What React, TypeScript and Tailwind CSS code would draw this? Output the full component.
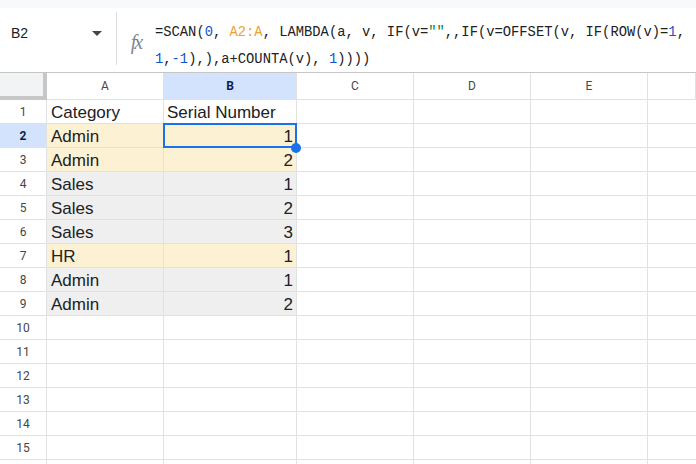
import React from 'react';

const COLS = ['A', 'B', 'C', 'D', 'E', ''];
const COL_W = ['w-[117px]', 'w-[133px]', 'w-[117px]', 'w-[117px]', 'w-[117px]', 'flex-1'];

type Row = { a?: string; b?: string | number; tone?: 'yellow' | 'gray' };

const ROWS: Row[] = [
  { a: 'Category', b: 'Serial Number' },
  { a: 'Admin', b: 1, tone: 'yellow' },
  { a: 'Admin', b: 2, tone: 'yellow' },
  { a: 'Sales', b: 1, tone: 'gray' },
  { a: 'Sales', b: 2, tone: 'gray' },
  { a: 'Sales', b: 3, tone: 'gray' },
  { a: 'HR', b: 1, tone: 'yellow' },
  { a: 'Admin', b: 1, tone: 'gray' },
  { a: 'Admin', b: 2, tone: 'gray' },
  {}, {}, {}, {}, {}, {},
];

const TONE: Record<string, string> = {
  yellow: 'bg-[#fdf1d3]',
  gray: 'bg-[#efefef]',
};

const cellFont = { fontFamily: '"Liberation Sans", Arial, sans-serif' };
const headFont = { fontFamily: 'Roboto, "Liberation Sans", sans-serif' };
const monoFont = { fontFamily: '"Liberation Mono", "DejaVu Sans Mono", monospace' };

const Blue = ({ children }: { children: React.ReactNode }) => <span className="text-[#1155cc]">{children}</span>;

export default function App() {
  return (
    <div className="w-[696px] h-[464px] overflow-hidden bg-white relative text-[#202124]">
      <div className="h-[8px] bg-[#f8f9fa]" />

      {/* Formula bar */}
      <div className="h-[64px] flex">
        <div className="w-[116px] flex items-start justify-between pt-[15px] pl-[11px] pr-[14px]">
          <span className="text-[14px] leading-[20px]" style={cellFont}>B2</span>
          <svg width="10" height="5" viewBox="0 0 10 5" className="mt-[8px]">
            <path d="M0 0h10L5 5z" fill="#444746" />
          </svg>
        </div>
        <div className="w-px bg-[#dadce0] mt-[4px] mb-[7px]" />
        <div className="w-[38px] flex items-center justify-center">
          <span className="text-[20px] italic text-[#80868b] mt-[4px] tracking-[-2px]" style={{ fontFamily: '"Liberation Serif", serif' }}>
            fx
          </span>
        </div>
        <div className="flex-1 text-[13.8px] leading-[27px] pt-[11px] whitespace-pre" style={monoFont}>
          <div>
            =SCAN(<Blue>0</Blue>, <span className="text-[#f0a030]">A2:A</span>, LAMBDA(a, v, IF(v=
            <span className="text-[#0b8043]">""</span>,,IF(v=OFFSET(v, IF(ROW(v)=<Blue>1</Blue>,
          </div>
          <div>
            <Blue>1</Blue>,<Blue>-1</Blue>),),a+COUNTA(v), <Blue>1</Blue>))))
          </div>
        </div>
      </div>

      {/* Grid */}
      <div className="flex h-[28px] border-t border-[#c4c7c5] text-[12px] text-[#444746]" style={headFont}>
        <div className="w-[47px] bg-[#f1f3f4] border-r-[4px] border-b-[4px] border-[#c7c7c7]" />
        {COLS.map((c, i) => (
          <div
            key={i}
            className={`${COL_W[i]} border-r border-b border-[#e1e1e1] flex items-center justify-center ${
              c === 'B' ? 'bg-[#d3e3fd] font-bold text-[#0b1f4f]' : 'bg-white'
            }`}
          >
            {c}
          </div>
        ))}
      </div>

      {ROWS.map((r, ri) => {
        const n = ri + 1;
        const tone = r.tone ? TONE[r.tone] : 'bg-white';
        return (
          <div key={ri} className="flex h-[24px]">
            <div
              className={`w-[47px] border-r border-b border-[#e1e1e1] flex items-center justify-center text-[12px] ${
                n === 2 ? 'bg-[#d3e3fd] font-bold text-[#0b1f4f]' : 'text-[#444746]'
              }`}
              style={headFont}
            >
              {n}
            </div>
            <div
              className={`w-[117px] border-r border-b border-[#e1e1e1] ${tone} flex items-end px-[4px] text-[17px] leading-[20px]`}
              style={cellFont}
            >
              {r.a}
            </div>
            <div
              className={`w-[133px] border-r border-b border-[#e1e1e1] ${tone} flex items-end px-[3px] text-[17px] leading-[20px] ${
                typeof r.b === 'number' ? 'justify-end' : ''
              }`}
              style={cellFont}
            >
              {r.b}
            </div>
            {[0, 1, 2].map((k) => (
              <div key={k} className="w-[117px] border-r border-b border-[#e1e1e1]" />
            ))}
            <div className="flex-1 border-b border-[#e1e1e1]" />
          </div>
        );
      })}

      {/* Partial next row */}
      <div className="flex h-[24px]">
        <div className="w-[47px] border-r border-[#e1e1e1]" />
        <div className="w-[117px] border-r border-[#e1e1e1]" />
        <div className="w-[133px] border-r border-[#e1e1e1]" />
        {[0, 1, 2].map((k) => (
          <div key={k} className="w-[117px] border-r border-[#e1e1e1]" />
        ))}
      </div>

      {/* Selection on B2 */}
      <div className="absolute left-[163px] top-[123px] w-[134px] h-[25px] border-2 border-[#1a73e8] pointer-events-none" />
      <div className="absolute left-[291px] top-[143px] w-[10px] h-[10px] rounded-full bg-[#1a73e8]" />
    </div>
  );
}
